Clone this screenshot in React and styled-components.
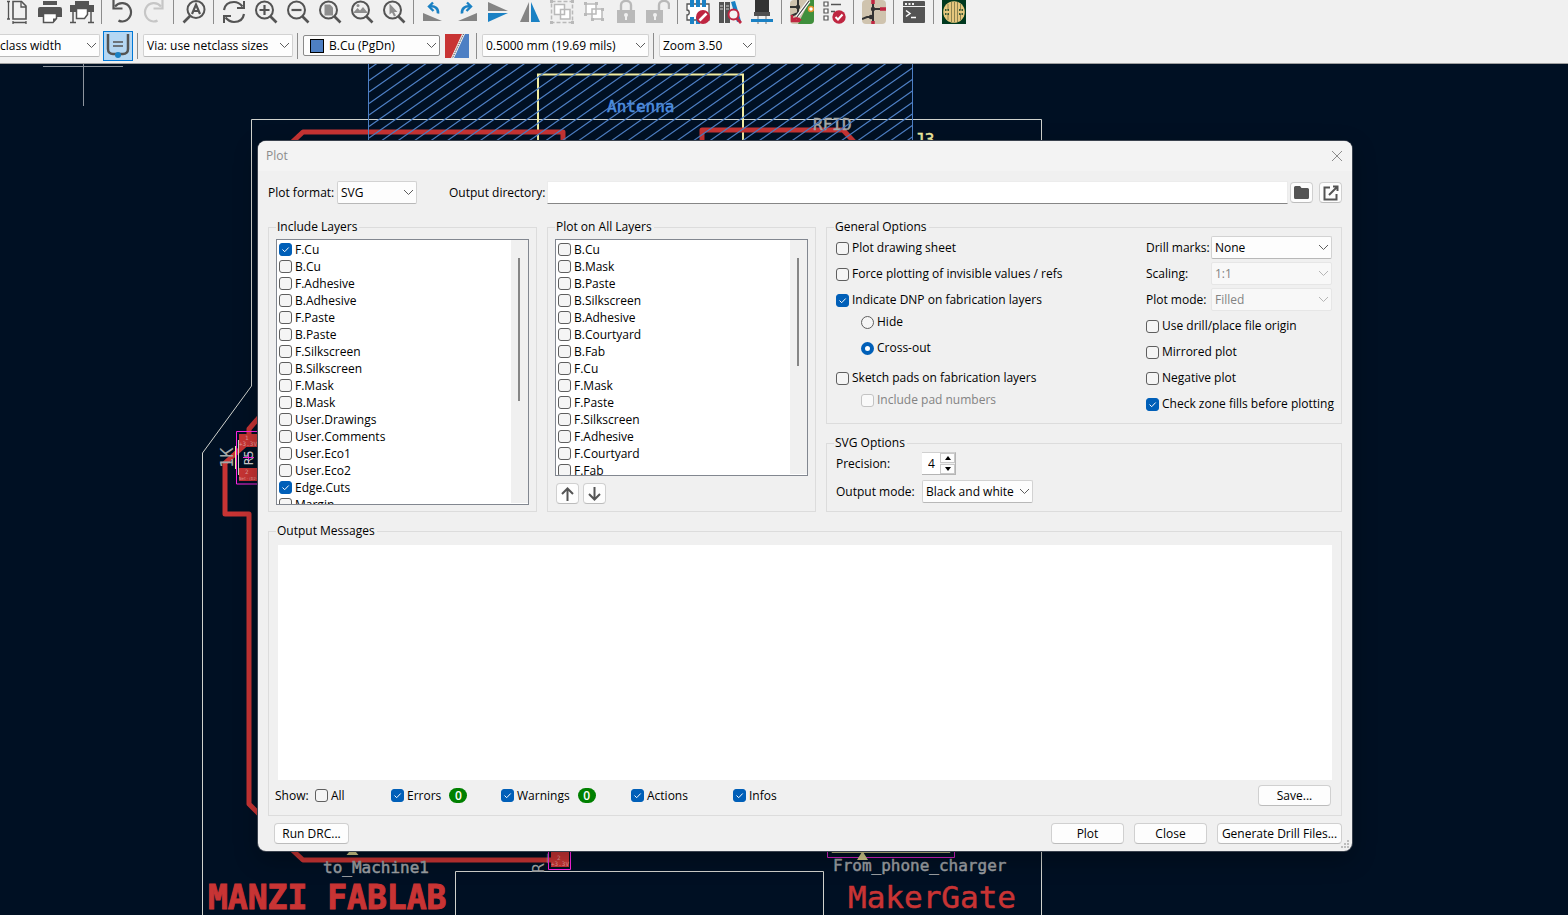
import { useState } from "react";
import styled, { createGlobalStyle, css } from "styled-components";

const GlobalStyle = createGlobalStyle`
  * {
    box-sizing: border-box;
  }
  body {
    margin: 0;
    overflow: hidden;
    background: #001023;
  }
  body, button, input, select, textarea {
    font-family: "Open Sans", "Noto Sans", sans-serif;
    font-size: 12px;
    line-height: 16px;
    color: #000;
  }
`;

const Page = styled.div`
  display: flex;
  flex-direction: column;
  min-height: 100vh;
`;

/* ---------- toolbars ---------- */

const Toolbars = styled.header`
  background: #f0f0f0;
  border-bottom: 1px solid #a0a0a0;
`;

const IconBar = styled.div`
  display: flex;
  height: 28px;
  padding-left: 2px;
  overflow: hidden;
`;

const ToolButton = styled.button`
  display: flex;
  flex: none;
  align-items: center;
  justify-content: center;
  width: 32px;
  height: 24px;
  padding: 0;
  border: none;
  background: none;
`;

const BarSeparator = styled.span`
  flex: none;
  width: 1px;
  height: ${(p) => (p.$tall ? 26 : 24)}px;
  margin: ${(p) => (p.$tall ? "0 5px 0 4px" : "0 4px 0 3px")};
  background: #8c8c8c;
`;

const OptionBar = styled.div`
  display: flex;
  align-items: center;
  height: 35px;
`;

const ToggleButton = styled.button`
  display: flex;
  align-items: center;
  justify-content: center;
  width: 30px;
  height: 30px;
  margin-left: 3px;
  padding: 0;
  border: 1px solid #0078d7;
  background: #b5d7f3;
`;

const LayerPairButton = styled.button`
  display: flex;
  width: 24px;
  height: 24px;
  margin: 0 3px 0 5px;
  padding: 0;
  border: none;
  background: none;
`;

/* ---------- board canvas ---------- */

const Canvas = styled.main`
  position: relative;
  flex: 1;
  background: #001023;
`;

const Board = styled.svg`
  position: absolute;
  width: 100%;
  height: 100%;
  font-family: "DejaVu Sans Mono", monospace;
`;

/* ---------- dialog ---------- */

const Dialog = styled.section`
  position: absolute;
  top: 77px;
  left: 258px;
  right: 216px;
  overflow: hidden;
  border-radius: 8px;
  background: #f0f0f0;
  box-shadow: 0 0 0 1px #3a424e, 0 8px 24px rgba(0, 0, 0, 0.3);
`;

const TitleBar = styled.div`
  display: flex;
  align-items: center;
  justify-content: space-between;
  height: 30px;
  padding: 0 8px;
  background: #f3f3f3;
  color: #8b8b8b;
`;

const CloseButton = styled.button`
  display: flex;
  padding: 0;
  border: none;
  background: none;
`;

const DialogBody = styled.div`
  padding: 10px 10px 0;
`;

const PathRow = styled.div`
  display: flex;
  align-items: center;
  height: 23px;
  margin-bottom: 15px;
`;

const PathLabel = styled.label`
  flex: none;
  width: ${(p) => p.$width}px;
  margin-left: ${(p) => p.$indent || 0}px;
`;

const PathInput = styled.input`
  flex: 1;
  height: 23px;
  margin-right: 2px;
  padding: 0 4px;
  border: 1px solid #ececec;
  border-bottom-color: #868686;
  background: #fff;
`;

const Button = styled.button`
  display: flex;
  align-items: center;
  justify-content: center;
  width: ${(p) => p.$width}px;
  height: 21px;
  padding: 0;
  white-space: nowrap;
  border: 1px solid #d0d0d0;
  border-bottom-color: #bcbcbc;
  border-radius: 4px;
  background: #fdfdfd;
`;

const SelectBox = styled.div`
  display: grid;
  flex: none;
  align-items: center;
  width: ${(p) => (p.$width ? p.$width + "px" : "100%")};
  > * {
    grid-area: 1 / 1;
  }
  > svg {
    justify-self: end;
    margin-right: 3px;
    pointer-events: none;
    color: ${(p) => (p.$disabled ? "#b5b5b5" : "#5c5c5c")};
  }
`;

const SelectControl = styled.select`
  appearance: none;
  width: 100%;
  height: 23px;
  padding: 0 18px 0 3px;
  border: 1px solid #d2d2d2;
  border-bottom-color: #b8b8b8;
  border-radius: 2px;
  background: #fdfdfd;
  color: #000;

  ${(p) =>
    p.$swatch &&
    css`
      height: 21px;
      padding-left: 25px;
      border-color: #8a8a8a;
    `}
  ${(p) =>
    p.$cut &&
    css`
      padding-left: 0;
      border-left: none;
      border-radius: 0 2px 2px 0;
    `}
  &:disabled {
    border-color: #e6e6e6;
    background: #f8f8f8;
    color: #838383;
    opacity: 1;
  }
`;

const Swatch = styled.span`
  width: 14px;
  height: 14px;
  margin-left: 7px;
  border: 1px solid #000;
  background: #4d7fc4;
  pointer-events: none;
`;

const Groups = styled.div`
  display: grid;
  grid-template-columns: 269px 269px minmax(0, 1fr);
  gap: 10px;
`;

const GroupBox = styled.fieldset`
  min-width: 0;
  margin: 0;
  padding: ${(p) => p.$padding};
  border: 1px solid #dcdcdc;
`;

const GroupTitle = styled.legend`
  height: 16px;
  padding: 0 2px 0 1px;
  margin-left: ${(p) => (p.$outset ? -2 : 0)}px;
`;

const LayerList = styled.div`
  display: flex;
  height: ${(p) => p.$height}px;
  overflow: hidden;
  border: 1px solid #828790;
  background: #fff;
`;

const LayerItems = styled.div`
  flex: 1;
  padding: 1px 0 0 2px;
`;

const ScrollTrack = styled.div`
  width: 17px;
  margin-bottom: 1px;
  padding: 18px 0 0 7px;
  background: #f0f0f0;
`;

const ScrollThumb = styled.div`
  width: 2px;
  height: ${(p) => p.$length}px;
  background: #868686;
`;

const CheckLabel = styled.label`
  display: flex;
  align-items: center;
  gap: 3px;
  height: ${(p) => (p.$dense ? 17 : 18)}px;
  white-space: nowrap;
  color: ${(p) => (p.$disabled ? "#838383" : "#000")};
`;

const tick = `url("data:image/svg+xml,%3Csvg xmlns='http://www.w3.org/2000/svg' viewBox='0 0 11 11'%3E%3Cpath d='M2.5 5.5l2.2 2.2 4-4.2' fill='none' stroke='white'/%3E%3C/svg%3E")`;

const Tick = styled.input`
  appearance: none;
  flex: none;
  width: 13px;
  height: 13px;
  margin: 0;
  border: 1px solid #5f5f5f;
  border-radius: 3px;
  background: #f5f5f5;

  &:checked {
    border-color: #005fb8;
    background: #005fb8 ${tick} center / 11px 11px;
  }
  &:disabled {
    border-color: #c3c3c3;
    background: #f9f9f9;
  }
`;

const Radio = styled(Tick)`
  border-radius: 50%;

  &:checked {
    border: 4px solid #005fb8;
    background: #fff;
  }
`;

const ListButtons = styled.div`
  display: flex;
  gap: 4px;
  padding: 7px 0 0 1px;
`;

const RightColumn = styled.div`
  display: flex;
  flex-direction: column;
  gap: 11px;
`;

const GeneralGrid = styled.div`
  display: grid;
  grid-template-columns: minmax(0, 1fr) 186px;
`;

const LeftOptions = styled.div`
  display: flex;
  flex-direction: column;
  gap: 8px;
  padding-top: 3px;
`;

const OptionBlock = styled.div`
  display: flex;
  flex-direction: column;
  gap: 4px;
  padding-bottom: 4px;
`;

const SubOptions = styled.div`
  display: flex;
  flex-direction: column;
  gap: 8px;
  padding-left: 25px;
`;

const RightOptions = styled.div`
  display: flex;
  flex-direction: column;
  gap: 6px;
`;

const FormGrid = styled.div`
  display: grid;
  grid-template-columns: ${(p) => p.$columns};
  row-gap: ${(p) => p.$gap}px;
  align-items: center;
`;

const CheckStack = styled.div`
  display: flex;
  flex-direction: column;
  gap: 8px;
`;

const Spinner = styled.div`
  display: flex;
  width: 34px;
  height: 23px;
  border: 1px solid #b4b4b4;
  border-left: none;
  border-top-color: #d0d0d0;
`;

const SpinInput = styled.input`
  appearance: textfield;
  width: 18px;
  padding: 0 0 0 6px;
  border: none;
  background: #fff;
  &::-webkit-inner-spin-button {
    display: none;
  }
`;

const SpinButtons = styled.div`
  display: grid;
  flex: 1;
  gap: 1px;
`;

const SpinButton = styled.button`
  display: flex;
  align-items: center;
  justify-content: center;
  height: 10px;
  padding: 0;
  border: 1px solid #c9c9c9;
  background: #fdfdfd;
`;

const OutputGroup = styled(GroupBox)`
  margin-top: 11px;
`;

const Messages = styled.textarea`
  display: block;
  width: 100%;
  height: 235px;
  padding: 4px;
  resize: none;
  border: none;
  background: #fff;
`;

const ShowRow = styled.div`
  display: grid;
  grid-template-columns: 40px 76px 110px 130px 102px 1fr auto;
  align-items: center;
  height: 21px;
  margin: 5px 1px 0 -3px;
`;

const Filter = styled.div`
  display: flex;
  align-items: center;
  gap: 8px;
`;

const Badge = styled.output`
  width: 18px;
  height: 15px;
  border-radius: 8px;
  background: #008000;
  color: #fff;
  font-weight: 600;
  line-height: 15px;
  text-align: center;
`;

const Footer = styled.footer`
  display: flex;
  gap: 10px;
  padding: 7px 0 7px 6px;
`;

const Spacer = styled.div`
  flex: 1;
`;

const SizeGrip = styled.svg`
  position: absolute;
  right: 2px;
  bottom: 2px;
`;

/* ---------- icons ---------- */

const GREY = "#545454";
const BLUE = "#1a81c4";
const PALE = "#b9b9b9";
const RED = "#bf2641";

function Icon({ children }) {
  return (
    <svg width="24" height="24" viewBox="0 0 24 24" fill="none" stroke={GREY} strokeWidth="2">
      {children}
    </svg>
  );
}

function Lens({ children }) {
  return (
    <Icon>
      <circle cx="10.500" cy="10" r="8.500" />
      <path d="M16.500 16.500L22.500 22.500" strokeWidth="2.600" />
      {children}
    </Icon>
  );
}

const icons = {
  page: (
    <Icon>
      <path d="M7 1.500h8.500l4.500 4.500v13H7z" strokeWidth="1.600" />
      <path d="M15 1.500V7h5M2.500 1v18M1 1.500h3M1 19h3M7 22.500h13M7 21v3M20 21v3" strokeWidth="1.300" />
    </Icon>
  ),
  print: (
    <Icon>
      <path d="M5 1h14v4H5zM2 7h20a2 2 0 0 1 2 2v8h-5v-4H5v4H0V9a2 2 0 0 1 2-2z" fill={GREY} stroke="none" />
      <path d="M5.500 13.500h13v5l-3.500 4H5.500z" fill="#fff" strokeWidth="1.500" />
      <path d="M18.500 18.500H15v4z" fill={GREY} stroke="none" />
    </Icon>
  ),
  plotter: (
    <Icon>
      <path d="M0 5h24v7H0zM5 1h14v4H5z" fill={GREY} stroke="none" />
      <path d="M6.500 8.500h11v6l-3 4h-8z" fill="#fff" strokeWidth="1.500" />
      <path d="M3 12v10M21 12v10M0 22.500h6M18 22.500h6" strokeWidth="1.500" />
    </Icon>
  ),
  undo: (
    <Icon>
      <path d="M5 6.500C9 1.500 17 2 20 8c3 6-1 13-7.500 13.500-1.500 0-2.500 0-4-1" strokeWidth="2.200" />
      <path d="M3.500 0v8.500h9" strokeWidth="2.200" />
    </Icon>
  ),
  redo: (
    <Icon>
      <path d="M19 6.500C15 1.500 7 2 4 8c-3 6 1 13 7.500 13.500 1.500 0 2.500 0 4-1" stroke="#c6c6c6" strokeWidth="2.200" />
      <path d="M20.500 0v8.500h-9" stroke="#c6c6c6" strokeWidth="2.200" />
    </Icon>
  ),
  find: (
    <Icon>
      <circle cx="14" cy="9.500" r="8.500" />
      <path d="M8 16l-6.500 6.500" strokeWidth="2.600" />
      <path d="M10 14l4-9.500 4 9.500M11.500 11h5" strokeWidth="2.200" />
    </Icon>
  ),
  refresh: (
    <Icon>
      <path d="M2 10C3 4 7 2 12 2c3.500 0 6 1.500 8.500 4.500M22 14c-1 6-5 8-10 8-3.500 0-6-1.500-8.500-4.500" strokeWidth="2.200" />
      <path d="M22 1v7h-7M2 23v-7h7" />
    </Icon>
  ),
  zoomIn: (
    <Lens>
      <path d="M10.500 5v10M5.500 10h10" strokeWidth="2.200" />
    </Lens>
  ),
  zoomOut: (
    <Lens>
      <path d="M5.500 10h10" strokeWidth="2.200" />
    </Lens>
  ),
  zoomPage: (
    <Lens>
      <path d="M6.500 4.500h5.500l3 3v8H6.500z" fill="#8e8e8e" stroke="none" />
    </Lens>
  ),
  zoomObjects: (
    <Lens>
      <path d="M3 13l4.500-5 2.500 2.500L13 7l5 6z" fill="#8e8e8e" stroke="none" />
      <circle cx="8" cy="5.500" r="1.500" fill="#8e8e8e" stroke="none" />
    </Lens>
  ),
  zoomSelection: (
    <Lens>
      <path d="M7.500 3.500v11l2.500-2 2 4 2-1-2-3.500h3.500z" fill="#8e8e8e" stroke="none" />
    </Lens>
  ),
  rotateLeft: (
    <Icon>
      <path d="M1 13v8h19z" fill="#848484" stroke="none" />
      <path d="M16 13.500C16.500 8.500 13 5.500 7.500 6.500" stroke={BLUE} strokeWidth="2.600" />
      <path d="M11 2.500L7 6.500l4.500 4.500" stroke={BLUE} strokeWidth="2.400" />
    </Icon>
  ),
  rotateRight: (
    <Icon>
      <path d="M23 13v8H4z" fill="#848484" stroke="none" />
      <path d="M8 13.500C7.500 8.500 11 5.500 16.500 6.500" stroke={BLUE} strokeWidth="2.600" />
      <path d="M13 2.500l4 4-4.500 4.500" stroke={BLUE} strokeWidth="2.400" />
    </Icon>
  ),
  flipV: (
    <Icon>
      <path d="M2 2l20 9H2z" fill="#848484" stroke="none" />
      <path d="M2 22l20-9H2z" fill={BLUE} stroke="none" />
    </Icon>
  ),
  flipH: (
    <Icon>
      <path d="M11 2v20H2z" fill="#848484" stroke="none" />
      <path d="M13 2v20h9z" fill={BLUE} stroke="none" />
    </Icon>
  ),
  group: (
    <Icon>
      <path d="M1.500 1.500h21v21h-21z" stroke={PALE} strokeWidth="1.500" strokeDasharray="4 2" />
      <path d="M4.500 4.500h10v10h-10zM10.500 9.500h9.500v9.500h-9.500z" fill="#fff" stroke={PALE} strokeWidth="1.500" />
      <path d="M0 0h3v3H0zM21 0h3v3h-3zM0 21h3v3H0zM21 21h3v3h-3z" fill={PALE} stroke="none" />
    </Icon>
  ),
  ungroup: (
    <Icon>
      <path d="M4 4h10v10H4zM10 9h10v10H10z" fill="#fff" stroke={PALE} strokeWidth="1.500" />
      <path d="M2 2h3v3H2zM13 2h3v3h-3zM2 13h3v3H2zM9 18h3v3H9zM19 18h3v3h-3zM19 8h3v3h-3z" fill={PALE} stroke="none" />
    </Icon>
  ),
  lock: (
    <Icon>
      <path d="M3 10h18v13H3z" fill={PALE} stroke="none" />
      <path d="M7 11V5c0-5.500 10-5.500 10 0v6" stroke={PALE} strokeWidth="2.400" />
      <path d="M12 14v6" stroke="#f0f0f0" strokeWidth="2" />
      <circle cx="12" cy="15" r="2" fill="#f0f0f0" stroke="none" />
    </Icon>
  ),
  unlock: (
    <Icon>
      <path d="M0 10h17v13H0z" fill={PALE} stroke="none" />
      <path d="M13 11V5c0-5.500 10-5.500 10 0v4" stroke={PALE} strokeWidth="2.400" />
      <path d="M9 14v6" stroke="#f0f0f0" strokeWidth="2" />
      <circle cx="9" cy="15" r="2" fill="#f0f0f0" stroke="none" />
    </Icon>
  ),
  footprints: (
    <Icon>
      <path d="M1 4h22v16H1v-5c3 0 3-5 0-5z" fill="#fff" strokeWidth="1.300" />
      <path d="M4 0h4v7H4zM10 0h4v7h-4zM16 0h4v7h-4zM4 17h4v7H4zM10 17h4v7h-4z" fill={BLUE} stroke="none" />
      <circle cx="17" cy="17" r="7" fill={RED} stroke="none" />
      <path d="M13.500 20.500l7-7" stroke="#fff" strokeWidth="2.600" />
    </Icon>
  ),
  library: (
    <Icon>
      <path d="M1 2h5v21H1zM7 2h5v21H7z" fill={GREY} stroke="none" />
      <path d="M13 2l4-1 6 20-4 1z" fill={BLUE} stroke="none" />
      <path d="M2 6h3M8 6h3M2 9h3M8 9h3" stroke="#d0d0d0" strokeWidth="1" />
      <circle cx="15.500" cy="14.500" r="5" fill="#f4f4f4" stroke={RED} />
      <path d="M19 18.500l4 4.500" stroke={RED} strokeWidth="2.800" />
    </Icon>
  ),
  chip: (
    <Icon>
      <path d="M5 0h14v12H5z" fill="#333" stroke="none" />
      <path d="M4 12h16v4H4z" fill="#505050" stroke="none" />
      <path d="M8 16v8M16 16v8" stroke="#9a9a9a" strokeWidth="1.500" />
      <path d="M1 20.500h22" stroke={BLUE} strokeWidth="3" />
    </Icon>
  ),
  update: (
    <Icon>
      <rect width="24" height="24" rx="4" fill="#cfc3ae" stroke="none" />
      <path d="M24 0v20a4 4 0 0 1-4 4H8L20 0z" fill="#3f8f3c" stroke="none" />
      <path d="M0 7h8V0M8 7v6l-7 3" stroke="#333" strokeWidth="2" />
      <circle cx="8" cy="7" r="2.200" fill="#333" stroke="none" />
      <path d="M19 1L7 17" stroke="#fff" strokeWidth="3.500" />
      <path d="M19 1L7 17" stroke="#444" strokeWidth="1.200" />
      <circle cx="21" cy="9" r="2.500" fill="#fff" stroke="#e5912c" strokeWidth="1.500" />
      <path d="M2 15v6h8M2 20.500c4-4 7-2 9 0" stroke={RED} strokeWidth="2.400" />
    </Icon>
  ),
  drc: (
    <Icon>
      <path d="M2 2h4v4H2zM2 9h4v4H2zM2 16h4v4H2z" fill="#fff" strokeWidth="1.200" />
      <path d="M9 4.500h10M9 11.500h4" strokeWidth="1.300" />
      <circle cx="17" cy="17" r="6.700" fill={RED} stroke="none" />
      <path d="M13.500 17l2.500 2.500 4.500-5" stroke="#fff" />
    </Icon>
  ),
  schematic: (
    <Icon>
      <rect width="24" height="24" rx="4" fill="#cfc3ae" stroke="none" />
      <path d="M11 0v9M11 9h9M11 9v8M0 19l5-2h6M11 17v4" stroke="#333" />
      <path d="M11 0v4M18 9h6M11 21v3" stroke={RED} strokeWidth="3.500" />
      <circle cx="11" cy="9" r="2.200" fill="#333" stroke="none" />
      <circle cx="9" cy="17" r="2.200" fill="#333" stroke="none" />
    </Icon>
  ),
  console: (
    <Icon>
      <rect x="1" y="1" width="22" height="22" rx="1" fill={GREY} stroke="none" />
      <path d="M1 6.500h22" stroke="#f0f0f0" strokeWidth="1" />
      <path d="M3 4h2M6.500 4h2M10 4h2" stroke="#f0f0f0" />
      <path d="M4 10.500l4 3-4 3M9 17.500h5" stroke="#fff" strokeWidth="1.500" />
    </Icon>
  ),
  plugin: (
    <Icon>
      <path d="M0 0h24v24H0z" fill="#00391f" stroke="none" />
      <circle cx="12" cy="12" r="10.800" fill="#e5c77d" stroke="none" />
      <path d="M9.500 2v20M12.500 2v20M15.500 2v20M6 4v6M6 14v6M18.500 4v6M18.500 14v6" stroke="#8d8450" strokeWidth="1" />
      <path d="M3 10h4M3 14h4M17 10h4M17 14h4" stroke="#00391f" strokeWidth="1.500" strokeDasharray="1.500 1" />
    </Icon>
  ),
};

const toolGroups = [
  [["page", "Page settings"], ["print", "Print"], ["plotter", "Plot"]],
  [["undo", "Undo"], ["redo", "Redo"]],
  [["find", "Find"]],
  [
    ["refresh", "Refresh"],
    ["zoomIn", "Zoom in"],
    ["zoomOut", "Zoom out"],
    ["zoomPage", "Zoom to fit"],
    ["zoomObjects", "Zoom to objects"],
    ["zoomSelection", "Zoom to selection"],
  ],
  [
    ["rotateLeft", "Rotate counterclockwise"],
    ["rotateRight", "Rotate clockwise"],
    ["flipV", "Mirror vertically"],
    ["flipH", "Mirror horizontally"],
    ["group", "Group"],
    ["ungroup", "Ungroup"],
    ["lock", "Lock"],
    ["unlock", "Unlock"],
  ],
  [["footprints", "Footprint editor"], ["library", "Footprint library"], ["chip", "3D viewer"]],
  [["update", "Update from schematic"], ["drc", "Design rules checker"]],
  [["schematic", "Schematic editor"]],
  [["console", "Scripting console"]],
  [["plugin", "Plugin"]],
];

function Chevron() {
  return (
    <svg width="11" height="7" viewBox="0 0 11 7" fill="none" stroke="currentColor">
      <path d="M1 1l4.500 4.500L10 1" />
    </svg>
  );
}

/* ---------- form parts ---------- */

function Select({ id, label, value, width, disabled, swatch, cut }) {
  return (
    <SelectBox $width={width} $disabled={disabled}>
      <SelectControl
        id={id}
        aria-label={label}
        disabled={disabled}
        $swatch={swatch}
        $cut={cut}
      >
        <option>{value}</option>
      </SelectControl>
      {swatch && <Swatch />}
      <Chevron />
    </SelectBox>
  );
}

function Check({ label, checked, disabled, dense }) {
  const [on, setOn] = useState(!!checked);
  return (
    <CheckLabel $dense={dense} $disabled={disabled}>
      <Tick
        type="checkbox"
        checked={on}
        disabled={disabled}
        onChange={() => setOn(!on)}
      />
      {label}
    </CheckLabel>
  );
}

function Layers({ items, selected = [], height, thumb }) {
  return (
    <LayerList $height={height}>
      <LayerItems>
        {items.map((name) => (
          <Check key={name} dense label={name} checked={selected.includes(name)} />
        ))}
      </LayerItems>
      <ScrollTrack>
        <ScrollThumb $length={thumb} />
      </ScrollTrack>
    </LayerList>
  );
}

const includeLayers = [
  "F.Cu",
  "B.Cu",
  "F.Adhesive",
  "B.Adhesive",
  "F.Paste",
  "B.Paste",
  "F.Silkscreen",
  "B.Silkscreen",
  "F.Mask",
  "B.Mask",
  "User.Drawings",
  "User.Comments",
  "User.Eco1",
  "User.Eco2",
  "Edge.Cuts",
  "Margin",
];

const allLayers = [
  "B.Cu",
  "B.Mask",
  "B.Paste",
  "B.Silkscreen",
  "B.Adhesive",
  "B.Courtyard",
  "B.Fab",
  "F.Cu",
  "F.Mask",
  "F.Paste",
  "F.Silkscreen",
  "F.Adhesive",
  "F.Courtyard",
  "F.Fab",
];

/* ---------- board drawing ---------- */

const hatch = Array.from({ length: 46 }, (_, i) => {
  const y = 69 + i * 11.5;
  return `M369 ${y}l544 -381`;
}).join("");

function BoardDrawing() {
  return (
    <Board viewBox="0 64 1568 851" preserveAspectRatio="xMinYMin slice" fill="none">
      <clipPath id="zone">
        <path d="M369 64h544v90H369z" />
      </clipPath>
      <path d="M43 66.500h80M83.500 64v42" stroke="#8d959e" />
      <path
        d="M251.500 386V119.500H1041.500V915M251.500 386L202.500 453V915M455.500 915V871.500H823.500V915"
        stroke="#d0d2cd"
      />
      <path d="M538 145V74.500H743V145" stroke="#f2eda1" strokeWidth="2" />

      <g stroke="#c83434" strokeWidth="5" strokeLinejoin="round">
        <path d="M288 146L303 132H563V146" />
        <path d="M702 146V130H843L858 146" />
      </g>
      <g fontSize="16" strokeWidth="0.500">
        <text x="813" y="130" fill="#a5a8a8" stroke="#a5a8a8">RFID</text>
        <text x="915" y="145" fill="#f2eda1" stroke="#f2eda1">J3</text>
        <text x="607" y="112" fill="#4d8fe0" stroke="#4d8fe0">Antenna</text>
      </g>
      <path d={hatch} stroke="#4d7fc4" strokeWidth="1.200" clipPath="url(#zone)" />
      <path d="M368.500 64V145M912.500 64V145" stroke="#4d7fc4" />

      <path d="M239 434h24v13h-24zM239 468h24v13h-24z" fill="#c83434" />
      <path
        d="M262 414L249 429V440M246 444L225 463V514H249V804L262 817M288 846L303 860H556"
        stroke="#c83434"
        strokeWidth="5"
        strokeLinejoin="round"
      />
      <path d="M264 431.500H236.500V484H264M248.500 452v11M243 457.500h11" stroke="#ff26e2" />
      <path d="M238.500 440v35" stroke="#d0d2cd" />
      <path d="M235.500 446v23" stroke="#f2eda1" />
      <text x="245" y="440" fontSize="6" fill="#e39a9a">1</text>
      <text x="239" y="446" fontSize="6" fill="#e39a9a">+3.3V</text>
      <text x="245" y="474" fontSize="6" fill="#e39a9a">2</text>
      <text x="239" y="480" fontSize="4" fill="#e39a9a">Net-(D2-K)</text>
      <text transform="translate(253 465) rotate(-90)" fontSize="12" fill="#d0d2cd">R5</text>
      <text transform="translate(233 468) rotate(-90)" fontSize="17" fill="#a5a8a8">1K</text>

      <path d="M318 851.500h127" stroke="#d020c0" />
      <path d="M346.500 855l6-7 6 7z" fill="#cfc98a" />
      <path d="M551 846h18v21h-18z" fill="#c83434" />
      <path d="M548.500 846v23.500h22V846" stroke="#ff26e2" />
      <text x="557" y="860" fontSize="6" fill="#e39a9a">2</text>
      <text x="551" y="866" fontSize="6" fill="#e39a9a">+3.3V</text>
      <text transform="translate(544 873) rotate(-90)" fontSize="16" fill="#a5a8a8">R_1</text>
      <text x="573" y="852" fontSize="14" fill="#cfc98a">R</text>
      <path d="M827.500 846v11.500h127V846" stroke="#d020c0" />
      <path d="M832.500 846v6H949.500V846" stroke="#f2eda1" strokeWidth="1.500" />
      <path d="M857 860l5.500-9 5.500 9z" fill="#cfc98a" />

      <g fontSize="16" fill="#9a9da0" stroke="#9a9da0" strokeWidth="0.500">
        <text x="323" y="873">to_Machine1</text>
        <text x="833" y="871">From_phone_charger</text>
      </g>
      <text x="208" y="909" fontSize="33" fontWeight="bold" fill="#c83434" stroke="#c83434">
        MANZI FABLAB
      </text>
      <text x="848" y="908" fontSize="31" fill="#c83434" stroke="#c83434" strokeWidth="0.500">
        MakerGate
      </text>
    </Board>
  );
}

/* ---------- plot dialog ---------- */

function GeneralOptions() {
  const [dnp, setDnp] = useState("Cross-out");
  return (
    <GroupBox $padding="1px 9px 10px">
      <GroupTitle $outset>General Options</GroupTitle>
      <GeneralGrid>
        <LeftOptions>
          <Check label="Plot drawing sheet" />
          <Check label="Force plotting of invisible values / refs" />
          <OptionBlock>
            <Check label="Indicate DNP on fabrication layers" checked />
            <SubOptions>
              {["Hide", "Cross-out"].map((name) => (
                <CheckLabel key={name}>
                  <Radio
                    type="radio"
                    name="dnp"
                    checked={dnp === name}
                    onChange={() => setDnp(name)}
                  />
                  {name}
                </CheckLabel>
              ))}
            </SubOptions>
          </OptionBlock>
          <OptionBlock>
            <Check label="Sketch pads on fabrication layers" />
            <SubOptions>
              <Check label="Include pad numbers" disabled />
            </SubOptions>
          </OptionBlock>
        </LeftOptions>
        <RightOptions>
          <FormGrid $columns="65px 1fr" $gap={3}>
            <label htmlFor="drill">Drill marks:</label>
            <Select id="drill" value="None" />
            <label htmlFor="scaling">Scaling:</label>
            <Select id="scaling" value="1:1" disabled />
            <label htmlFor="mode">Plot mode:</label>
            <Select id="mode" value="Filled" disabled />
          </FormGrid>
          <CheckStack>
            <Check label="Use drill/place file origin" />
            <Check label="Mirrored plot" />
            <Check label="Negative plot" />
            <Check label="Check zone fills before plotting" checked />
          </CheckStack>
        </RightOptions>
      </GeneralGrid>
    </GroupBox>
  );
}

function SvgOptions() {
  const [precision, setPrecision] = useState(4);
  return (
    <GroupBox $padding="1px 9px 8px">
      <GroupTitle $outset>SVG Options</GroupTitle>
      <FormGrid $columns="86px 1fr" $gap={5}>
        <label htmlFor="precision">Precision:</label>
        <Spinner>
          <SpinInput
            id="precision"
            type="number"
            value={precision}
            onChange={(e) => setPrecision(Number(e.target.value))}
          />
          <SpinButtons>
            <SpinButton aria-label="Increase" onClick={() => setPrecision(precision + 1)}>
              <svg width="6" height="4"><path d="M0 4l3-4 3 4z" /></svg>
            </SpinButton>
            <SpinButton aria-label="Decrease" onClick={() => setPrecision(precision - 1)}>
              <svg width="6" height="4"><path d="M0 0l3 4 3-4z" /></svg>
            </SpinButton>
          </SpinButtons>
        </Spinner>
        <label htmlFor="output-mode">Output mode:</label>
        <Select id="output-mode" value="Black and white" width={111} />
      </FormGrid>
    </GroupBox>
  );
}

function PlotDialog() {
  return (
    <Dialog role="dialog" aria-label="Plot">
      <TitleBar>
        Plot
        <CloseButton aria-label="Close dialog">
          <svg width="14" height="14" viewBox="0 0 14 14" stroke="#8b8b8b">
            <path d="M2 2l10 10M12 2L2 12" />
          </svg>
        </CloseButton>
      </TitleBar>
      <DialogBody>
        <PathRow>
          <PathLabel htmlFor="format" $width={69}>Plot format:</PathLabel>
          <Select id="format" value="SVG" width={80} />
          <PathLabel htmlFor="directory" $width={98} $indent={32}>Output directory:</PathLabel>
          <PathInput id="directory" type="text" />
          <Button $width={23} aria-label="Browse">
            <svg width="15" height="13" viewBox="0 0 15 13" fill="#545454">
              <path d="M1.500 0H6l1.500 2h6A1.500 1.500 0 0 1 15 3.500v8a1.500 1.500 0 0 1-1.500 1.500h-12A1.500 1.500 0 0 1 0 11.500v-10A1.500 1.500 0 0 1 1.500 0z" />
            </svg>
          </Button>
          <PathLabel as="span" $width={6} />
          <Button $width={23} aria-label="Open">
            <svg width="16" height="16" viewBox="0 0 16 16" fill="none" stroke="#545454" strokeWidth="2">
              <path d="M7 2.500H1.500v12h12V9M10 1.500h4.500V6M14 2L6 10" />
            </svg>
          </Button>
        </PathRow>
        <Groups>
          <GroupBox $padding="4px 7px 6px">
            <GroupTitle>Include Layers</GroupTitle>
            <Layers
              items={includeLayers}
              selected={["F.Cu", "Edge.Cuts"]}
              height={266}
              thumb={143}
            />
          </GroupBox>
          <GroupBox $padding="4px 7px 7px">
            <GroupTitle>Plot on All Layers</GroupTitle>
            <Layers items={allLayers} height={237} thumb={108} />
            <ListButtons>
              <Button $width={23} aria-label="Move up">
                <svg width="13" height="14" viewBox="0 0 13 14" fill="none" stroke="#545454" strokeWidth="2">
                  <path d="M6.500 14V1.500M1 7L6.500 1.500 12 7" />
                </svg>
              </Button>
              <Button $width={23} aria-label="Move down">
                <svg width="13" height="14" viewBox="0 0 13 14" fill="none" stroke="#545454" strokeWidth="2">
                  <path d="M6.500 0v12.500M1 7L6.500 12.500 12 7" />
                </svg>
              </Button>
            </ListButtons>
          </GroupBox>
          <RightColumn>
            <GeneralOptions />
            <SvgOptions />
          </RightColumn>
        </Groups>
        <OutputGroup $padding="6px 9px 9px">
          <GroupTitle $outset>Output Messages</GroupTitle>
          <Messages aria-label="Output Messages" readOnly />
          <ShowRow>
            <span>Show:</span>
            <Check label="All" />
            <Filter>
              <Check label="Errors" checked />
              <Badge>0</Badge>
            </Filter>
            <Filter>
              <Check label="Warnings" checked />
              <Badge>0</Badge>
            </Filter>
            <Check label="Actions" checked />
            <Check label="Infos" checked />
            <Button $width={73}>Save...</Button>
          </ShowRow>
        </OutputGroup>
        <Footer>
          <Button $width={75}>Run DRC...</Button>
          <Spacer />
          <Button $width={73}>Plot</Button>
          <Button $width={73}>Close</Button>
          <Button $width={125}>Generate Drill Files...</Button>
        </Footer>
      </DialogBody>
      <SizeGrip width="9" height="9" fill="#bdbdbd">
        <path d="M6 0h2v2H6zM3 3h2v2H3zM6 3h2v2H6zM0 6h2v2H0zM3 6h2v2H3zM6 6h2v2H6z" />
      </SizeGrip>
    </Dialog>
  );
}

export default function App() {
  return (
    <Page>
      <GlobalStyle />
      <Toolbars>
        <IconBar>
          {toolGroups.map((group, i) => [
            i > 0 && <BarSeparator key={i} />,
            ...group.map(([name, label]) => (
              <ToolButton key={name} aria-label={label}>
                {icons[name]}
              </ToolButton>
            )),
          ])}
        </IconBar>
        <OptionBar>
          <Select label="Track width" value="class width" width={100} cut />
          <ToggleButton aria-label="Use existing track width">
            <svg width="24" height="26" viewBox="0 0 24 26" fill="none" stroke={GREY} strokeWidth="2.500">
              <path d="M2 1v15c0 3 2 5 5 5h10c3 0 5-2 5-5V1" />
              <path d="M7 9h10M7 13h10" strokeWidth="1.500" />
              <circle cx="12" cy="22" r="3" fill={BLUE} stroke="none" />
            </svg>
          </ToggleButton>
          <BarSeparator $tall />
          <Select label="Via size" value="Via: use netclass sizes" width={150} />
          <BarSeparator $tall />
          <Select label="Layer" value="B.Cu (PgDn)" width={137} swatch />
          <LayerPairButton aria-label="Layer pair">
            <svg width="24" height="24">
              <path d="M0 0h17L6 24H0z" fill="#c83434" />
              <path d="M20 0h4v24H9z" fill="#4d7fc4" />
              <path d="M18.500 0L7.500 24" stroke="#333" strokeDasharray="1 1" />
            </svg>
          </LayerPairButton>
          <BarSeparator $tall />
          <Select label="Grid" value="0.5000 mm (19.69 mils)" width={167} />
          <BarSeparator $tall />
          <Select label="Zoom" value="Zoom 3.50" width={97} />
        </OptionBar>
      </Toolbars>
      <Canvas>
        <BoardDrawing />
        <PlotDialog />
      </Canvas>
    </Page>
  );
}
